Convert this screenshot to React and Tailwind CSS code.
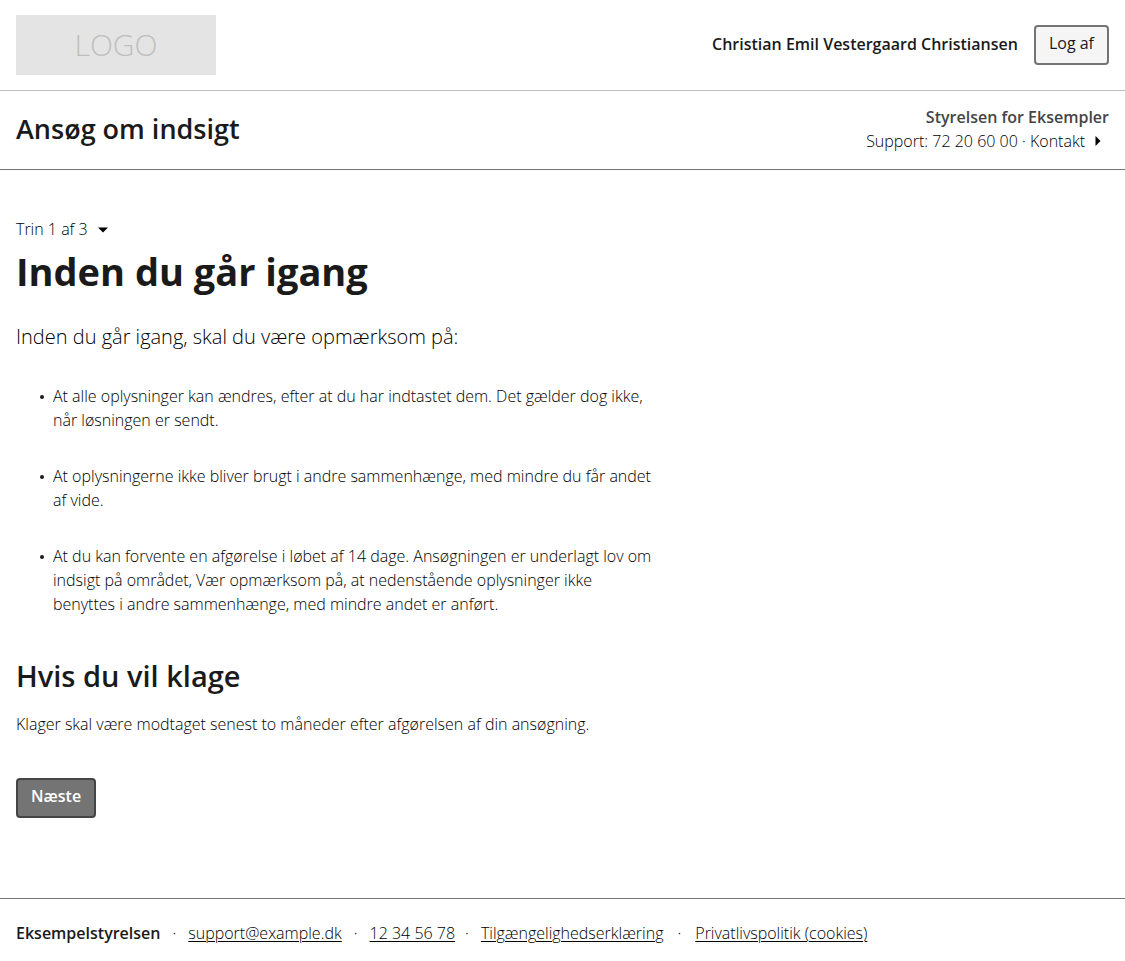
const bullets = [
  'At alle oplysninger kan ændres, efter at du har indtastet dem. Det gælder dog ikke, når løsningen er sendt.',
  'At oplysningerne ikke bliver brugt i andre sammenhænge, med mindre du får andet af vide.',
  'At du kan forvente en afgørelse i løbet af 14 dage. Ansøgningen er underlagt lov om indsigt på området, Vær opmærksom på, at nedenstående oplysninger ikke benyttes i andre sammenhænge, med mindre andet er anført.',
];

function Header() {
  return (
    <header>
      <div className="flex items-center justify-between border-b border-[#bfbfbf] px-4 py-[15px]">
        <a
          href="#forside"
          className="flex h-[60px] w-[200px] items-center justify-center bg-[#e4e4e4] text-[30px] text-[#bfbfbf]"
        >
          LOGO
        </a>
        <div className="flex items-center gap-4">
          <p className="pb-[3px] font-semibold text-[#1a1a1a]">Christian Emil Vestergaard Christiansen</p>
          <button
            type="button"
            className="rounded-[4px] border-2 border-[#747474] bg-[#f5f5f5] px-[13px] pt-1 pb-2 font-normal text-[#1a1a1a]"
          >
            Log af
          </button>
        </div>
      </div>
      <div className="flex items-center justify-between border-b border-[#747474] px-4 pt-3.5 pb-4">
        <p className="text-[27px] leading-9 font-semibold text-[#1a1a1a]">Ansøg om indsigt</p>
        <div className="text-right">
          <p className="font-semibold text-[#454545]">Styrelsen for Eksempler</p>
          <p className="flex items-center justify-end">
            <span>Support: 72 20 60 00 ·&nbsp;</span>
            <a href="#kontakt" className="flex items-center gap-2.5 pr-2">
              Kontakt
              <svg viewBox="0 0 6 10" className="h-2.5 w-1.5" aria-hidden="true">
                <path d="M0.5 0L5.5 5L0.5 10Z" fill="#000" />
              </svg>
            </a>
          </p>
        </div>
      </div>
    </header>
  );
}

function Footer() {
  const link = 'underline decoration-1 underline-offset-2';
  return (
    <footer className="flex flex-wrap border-t border-[#747474] px-4 pt-[22px] pb-4">
      <p className="font-semibold text-[#1a1a1a]">Eksempelstyrelsen</p>
      <span className="px-3">·</span>
      <a href="mailto:support@example.dk" className={link}>support@example.dk</a>
      <span className="px-3">·</span>
      <a href="tel:12345678" className={link}>12 34 56 78</a>
      <span className="pr-3 pl-2.5">·</span>
      <a href="#tilgaengelighed" className={link}>Tilgængelighedserklæring</a>
      <span className="px-3.5">·</span>
      <a href="#privatliv" className={link}>Privatlivspolitik (cookies)</a>
    </footer>
  );
}

export default function App() {
  return (
    <div className="bg-white font-['Open_Sans','Noto_Sans',sans-serif] text-base leading-6 font-light text-black">
      <Header />
      <main className="px-4 pt-[47px] pb-20">
        <button type="button" className="flex items-center gap-2.5">
          Trin 1 af 3
          <svg viewBox="0 0 10 6" className="mt-0.5 h-1.5 w-2.5" aria-hidden="true">
            <path d="M0 0.5L10 0.5L5 5.5Z" fill="#000" />
          </svg>
        </button>
        <h1 className="mt-1.5 text-[38px] leading-[48px] font-bold text-[#1a1a1a]">Inden du går igang</h1>
        <p className="mt-7 text-xl leading-7">Inden du går igang, skal du være opmærksom på:</p>
        <ul className="mt-[33px] flex max-w-[640px] flex-col gap-8 pl-6">
          {bullets.map((text) => (
            <li key={text} className="flex gap-[9px]">
              <span className="mt-[11px] size-1 shrink-0 rounded-full bg-[#1a1a1a]" />
              <span>{text}</span>
            </li>
          ))}
        </ul>
        <h2 className="mt-10 text-[29px] leading-10 font-semibold text-[#1a1a1a]">Hvis du vil klage</h2>
        <p className="mt-4">Klager skal være modtaget senest to måneder efter afgørelsen af din ansøgning.</p>
        <button
          type="button"
          className="mt-[42px] rounded-[4px] border-2 border-[#454545] bg-[#747474] px-[13px] pt-1 pb-2 font-semibold text-white"
        >
          Næste
        </button>
      </main>
      <Footer />
    </div>
  );
}
